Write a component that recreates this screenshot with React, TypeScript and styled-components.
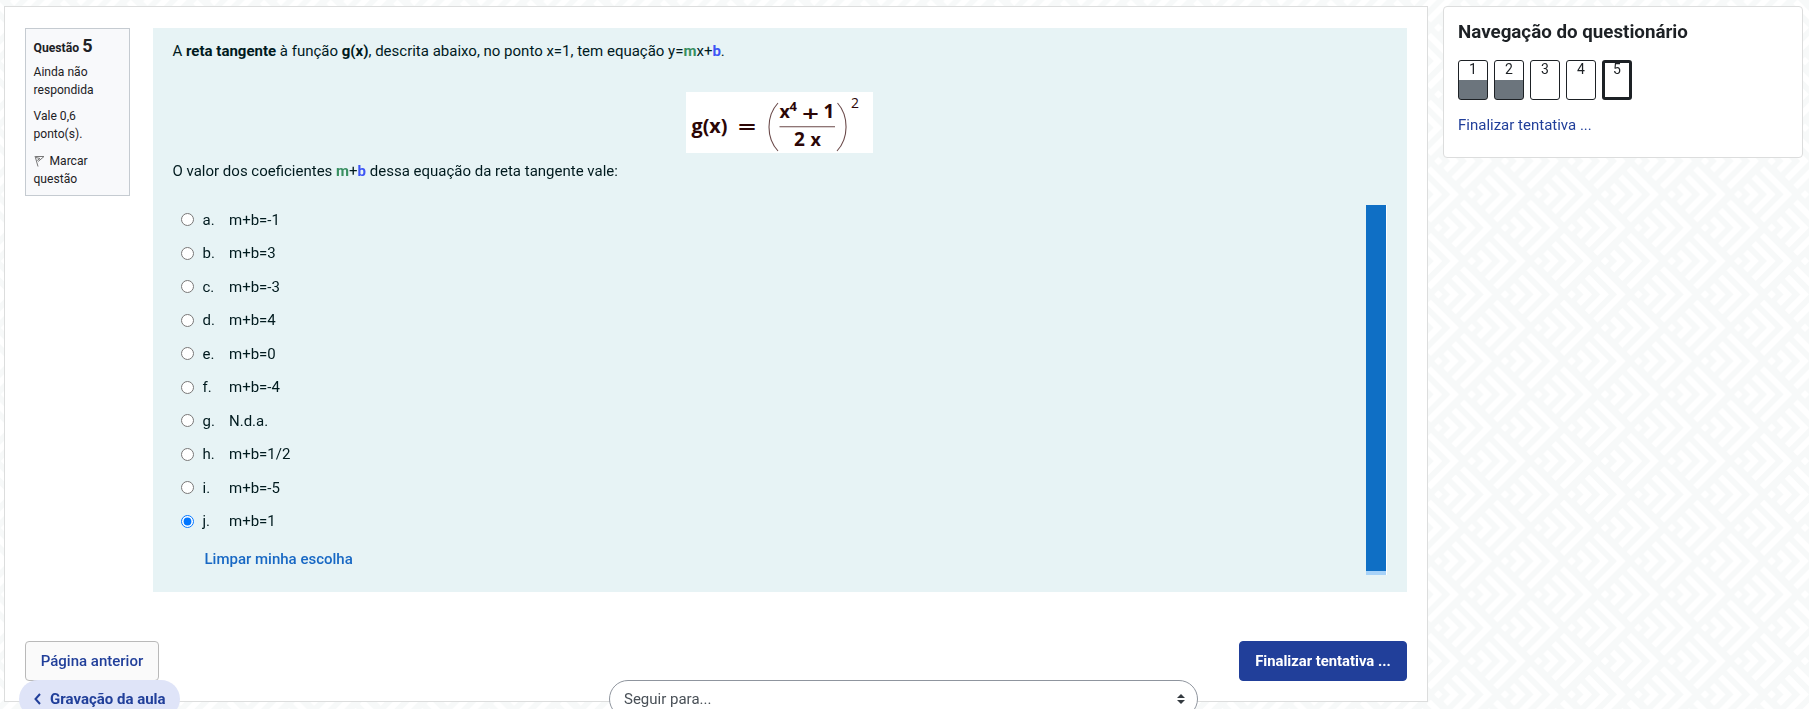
import React, { useState } from "react";
import styled, { createGlobalStyle, css } from "styled-components";

const GlobalStyle = createGlobalStyle`
  *, *::before, *::after { box-sizing: border-box; }
  html, body { margin: 0; height: 100%; overflow: hidden; }
  body {
    background: #f7f9f9;
    color: #1d2125;
    font-family: Roboto, "Liberation Sans", sans-serif;
    font-size: 15px;
    line-height: 22.5px;
  }
  p { margin: 0; }
`;

const Backdrop = styled.svg`
  position: fixed;
  inset: 0;
  width: 100%;
  height: 100%;
  z-index: -1;
`;

const Page = styled.div`
  display: flex;
  align-items: flex-start;
  gap: 15px;
  height: 709px;
  padding: 6px 6px 0 4px;
  overflow: hidden;
`;

const MainColumn = styled.main`
  width: 1424px;
`;

const MainCard = styled.section`
  height: 696px;
  padding: 21px 20px 0;
  background: #fff;
  border: 1px solid #dcdddd;
`;

const Question = styled.div`
  display: flex;
  align-items: flex-start;
  gap: 23px;
`;

const Info = styled.aside`
  width: 105px;
  height: 168px;
  padding: 6px 7.5px;
  background: #f8f9fb;
  border: 1px solid #c5cbd1;
  font-size: 12.1px;
  line-height: 18px;
`;

const QuestionNumber = styled.h3`
  margin: 0 0 4px;
  font-size: 12.2px;
  line-height: 22px;
  font-weight: 700;

  span { font-size: 18px; }
`;

const InfoText = styled.div<{ $gap?: number }>`
  margin-bottom: ${(p) => p.$gap ?? 8}px;
`;

const FlagIcon = styled.svg`
  width: 11px;
  height: 12px;
  margin: 0 5px 0 0;
  vertical-align: -2px;
`;

const Formulation = styled.div`
  width: 1254px;
  height: 564px;
  padding: 12px 20px 0 19.5px;
  background: #e7f3f5;
  color: #001a1e;
`;

const Statement = styled.p`
  font-size: 15px;
`;

const Mark = styled.strong<{ $color: string }>`
  color: ${(p) => p.$color};
`;

const FormulaRow = styled.div`
  display: flex;
  justify-content: center;
  padding: 29px 0 7px;
`;

const Formula = styled.svg`
  display: block;
  background: #fff;
  font-family: "Open Sans", sans-serif;
  font-weight: 700;
  fill: #2b0606;
`;

const AnswerArea = styled.div`
  display: flex;
  justify-content: space-between;
  align-items: flex-start;
  margin-top: 23px;
`;

const Options = styled.div`
  display: flex;
  flex-direction: column;
  margin-top: -2px;
  padding-left: 8.5px;
`;

const Option = styled.label`
  display: flex;
  align-items: center;
  height: 33.5px;
  line-height: 22px;

  input {
    width: 13px;
    height: 13px;
    margin: 0 8.5px 0 0;
  }
`;

const Letter = styled.span`
  width: 26.5px;
`;

const ClearChoice = styled.button`
  align-self: flex-start;
  margin: 10px 0 0 23.5px;
  padding: 0;
  border: 0;
  background: none;
  color: #1868c4;
  font: 500 15px/22px Roboto, sans-serif;
`;

const Meter = styled.div`
  width: 21px;
  height: 370px;
  background: linear-gradient(#0f6fc5 366px, #a7d2f8 366px);
  border-right: 1px solid #fff;
`;

const Actions = styled.div`
  display: flex;
  justify-content: space-between;
  margin-top: 49px;
`;

const Button = styled.button<{ $primary?: boolean }>`
  height: 40px;
  padding: 0;
  border-radius: 4px;
  font: 500 15px/22px Roboto, sans-serif;
  ${(p) =>
    p.$primary
      ? css`width: 168px; background: #213f9a; border: 1px solid #213f9a; color: #fff; font-weight: 700; font-size: 14.8px;`
      : css`width: 134px; background: #fafafa; border: 1px solid #b9b9b9; color: #213f9a;`}
`;

const ActivityNav = styled.nav`
  position: absolute;
  left: 19px;
  top: 680px;
  width: 1179px;
  display: flex;
  justify-content: space-between;
`;

const PreviousActivity = styled.a`
  display: flex;
  align-items: center;
  gap: 9px;
  width: 161px;
  height: 38px;
  padding: 0 0 0 15px;
  border-radius: 20px;
  background: #dfe4f8;
  color: #213f9a;
  font-weight: 700;
  white-space: nowrap;
`;

const JumpSelect = styled.div`
  display: flex;
  align-items: center;
  justify-content: space-between;
  width: 589px;
  height: 38px;
  padding: 0 12px 0 14px;
  background: #fff;
  border: 1px solid #8f959e;
  border-radius: 19px;
  color: #495057;
`;

const NavCard = styled.aside`
  width: 360px;
  height: 152px;
  padding: 13px 14px;
  background: #fff;
  border: 1px solid #dcdddd;
  border-radius: 4px;
`;

const NavTitle = styled.h2`
  margin: 0;
  font-size: 18.75px;
  line-height: 24px;
  font-weight: 700;
`;

const NavButtons = styled.div`
  display: flex;
  gap: 6px;
  margin: 16px 0 14px;
`;

const NavButton = styled.a<{ $answered?: boolean; $current?: boolean }>`
  width: 30px;
  height: 40px;
  border: ${(p) => (p.$current ? 3 : 1)}px solid #1d2125;
  border-radius: 3px;
  background: ${(p) => (p.$answered ? "linear-gradient(#fff 19px, #6c757d 19px)" : "#fff")};
  font-size: 14px;
  line-height: ${(p) => (p.$current ? 13 : 17)}px;
  text-align: center;
`;

const FinishLink = styled.a`
  display: block;
  color: #213f9a;
`;

const options = ["m+b=-1", "m+b=3", "m+b=-3", "m+b=4", "m+b=0", "m+b=-4", "N.d.a.", "m+b=1/2", "m+b=-5", "m+b=1"];

const tile = 66.67;
const half = tile / 2;

function Motif({ x, y }: { x: number; y: number }) {
  return (
    <g transform={`translate(${x} ${y})`} fill="none" stroke="#fff" strokeWidth="6">
      <path d="M-4.2 0L0-4.2 4.2 0 0 4.2Z" fill="#fff" stroke="none" />
      <path d="M7.1-9.2L16.3 0 7.1 9.2M15.3-17.7L33 0 15.3 17.7M23.7-26L49.7 0 23.7 26" />
    </g>
  );
}

function PatternBackdrop() {
  const cells: React.ReactElement[] = [];
  for (let i = -2; i <= 2; i++) {
    for (let j = -1; j <= 3; j++) {
      if ((i + j) % 2 === 0) cells.push(<Motif key={`${i}:${j}`} x={i * half} y={j * half} />);
    }
  }
  return (
    <Backdrop aria-hidden="true">
      <defs>
        <pattern id="chevrons" x="4.9" y="-5.6" width={tile} height={tile} patternUnits="userSpaceOnUse">
          {cells}
        </pattern>
      </defs>
      <rect width="100%" height="100%" fill="url(#chevrons)" />
    </Backdrop>
  );
}

function Equation() {
  return (
    <Formula width="187" height="61" viewBox="0 0 187 61">
      <text x="5.5" y="40.5" fontSize="19" textLength="36" lengthAdjust="spacingAndGlyphs">g(x)</text>
      <text x="52" y="42" fontSize="20" textLength="18" lengthAdjust="spacingAndGlyphs">=</text>
      <text x="93.5" y="26" fontSize="18">x</text>
      <text x="103.5" y="19" fontSize="13">4</text>
      <text x="116" y="28.5" fontSize="21" fontWeight="600" textLength="17" lengthAdjust="spacingAndGlyphs">+</text>
      <text x="137.5" y="26" fontSize="19">1</text>
      <text x="108" y="54" fontSize="19">2</text>
      <text x="124.5" y="54" fontSize="18">x</text>
      <text x="165" y="15.5" fontSize="14" fontWeight="500">2</text>
      <path d="M93.5 34.7H149M92 11C80 24 80 46 92 59M151.5 11C163 24 163 46 151 59" fill="none" stroke="#6b4a4a" strokeWidth="1.1" />
    </Formula>
  );
}

export default function App() {
  const [choice, setChoice] = useState(9);
  return (
    <>
      <GlobalStyle />
      <PatternBackdrop />
      <Page>
        <MainColumn>
          <MainCard>
            <Question>
              <Info>
                <QuestionNumber>Questão <span>5</span></QuestionNumber>
                <InfoText>Ainda não respondida</InfoText>
                <InfoText $gap={9}>Vale 0,6 ponto(s).</InfoText>
                <InfoText>
                  <FlagIcon viewBox="0 0 11 12" fill="none" stroke="#777" strokeWidth="1">
                    <path d="M1 1L4 11.5M1.3 1.5L10 1.5 4.2 6.5M2 2.5L6 3.5 3.2 5.5" />
                  </FlagIcon>
                  Marcar questão
                </InfoText>
              </Info>
              <Formulation>
                <Statement>
                  A <strong>reta tangente</strong> à função <strong>g(x)</strong>, descrita abaixo, no ponto x=1, tem equação y=
                  <Mark $color="#398f61">m</Mark>x+<Mark $color="#3d55f5">b</Mark>.
                </Statement>
                <FormulaRow><Equation /></FormulaRow>
                <Statement>
                  O valor dos coeficientes <Mark $color="#398f61">m</Mark>+<Mark $color="#3d55f5">b</Mark> dessa equação da reta tangente vale:
                </Statement>
                <AnswerArea>
                  <Options>
                    {options.map((text, i) => (
                      <Option key={text}>
                        <input type="radio" name="answer" checked={choice === i} onChange={() => setChoice(i)} />
                        <Letter>{"abcdefghij"[i]}.</Letter>
                        <span>{text}</span>
                      </Option>
                    ))}
                    <ClearChoice type="button" onClick={() => setChoice(-1)}>Limpar minha escolha</ClearChoice>
                  </Options>
                  <Meter />
                </AnswerArea>
              </Formulation>
            </Question>
            <Actions>
              <Button>Página anterior</Button>
              <Button $primary>Finalizar tentativa ...</Button>
            </Actions>
          </MainCard>
        </MainColumn>
        <NavCard>
          <NavTitle>Navegação do questionário</NavTitle>
          <NavButtons>
            <NavButton $answered>1</NavButton>
            <NavButton $answered>2</NavButton>
            <NavButton>3</NavButton>
            <NavButton>4</NavButton>
            <NavButton $current>5</NavButton>
          </NavButtons>
          <FinishLink>Finalizar tentativa ...</FinishLink>
        </NavCard>
        <ActivityNav>
          <PreviousActivity>
            <svg width="7" height="12" viewBox="0 0 7 12" fill="none" stroke="currentColor" strokeWidth="2"><path d="M6 1L1.5 6 6 11" /></svg>
            Gravação da aula
          </PreviousActivity>
          <JumpSelect>
            Seguir para...
            <svg width="8" height="10" viewBox="0 0 8 10" fill="#343a40"><path d="M0 4L4 0 8 4ZM0 6L4 10 8 6Z" /></svg>
          </JumpSelect>
        </ActivityNav>
      </Page>
    </>
  );
}
